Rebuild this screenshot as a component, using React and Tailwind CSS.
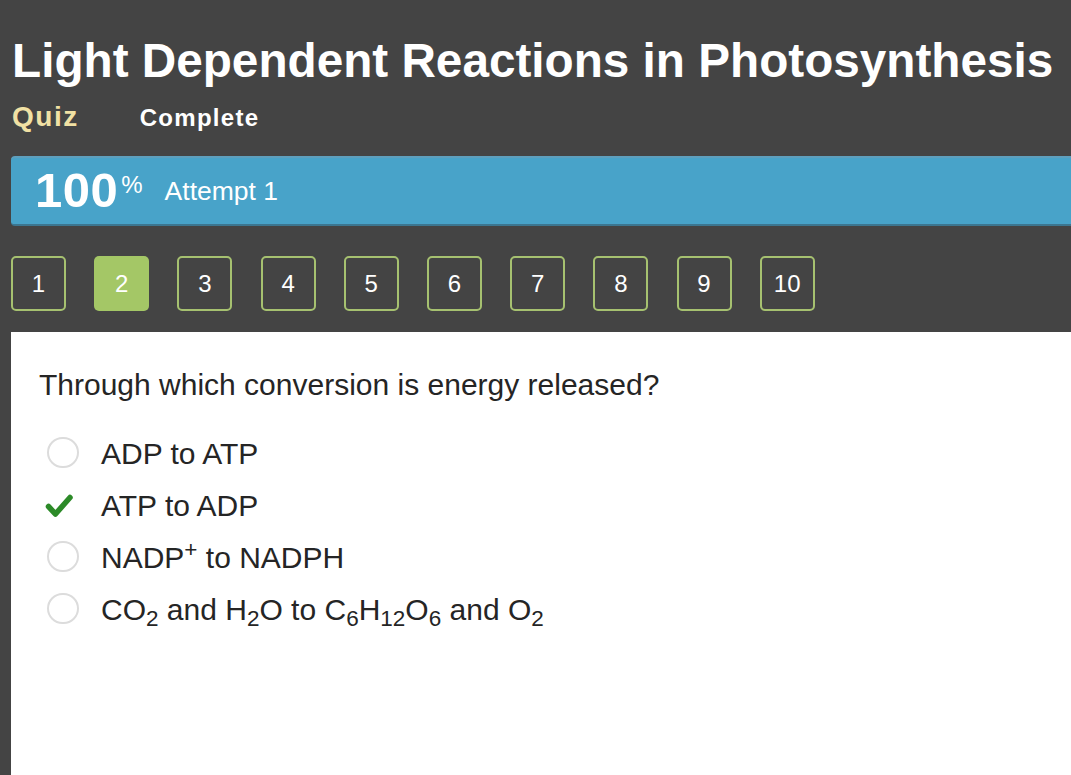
import React from 'react';

const questions = [1, 2, 3, 4, 5, 6, 7, 8, 9, 10];

const Radio = () => (
  <span className="block w-[32px] h-[31px] rounded-full border-2 border-[#dcdcdc] bg-white" />
);

const Check = () => (
  <svg width="32" height="32" viewBox="0 0 32 32" className="overflow-visible">
    <path
      d="M1.5 17.5 L8.5 25 L23 8.5"
      fill="none"
      stroke="#2c8a28"
      strokeWidth="5.5"
      strokeLinecap="round"
      strokeLinejoin="round"
    />
  </svg>
);

const App = () => {
  const options = [
    { id: 'a', checked: false, label: <>ADP to ATP</> },
    { id: 'b', checked: true, label: <>ATP to ADP</> },
    { id: 'c', checked: false, label: <>NADP<sup>+</sup> to NADPH</> },
    {
      id: 'd',
      checked: false,
      label: (
        <>
          CO<sub>2</sub> and H<sub>2</sub>O to C<sub>6</sub>H<sub>12</sub>O<sub>6</sub> and O<sub>2</sub>
        </>
      ),
    },
  ];

  return (
    <div
      className="min-h-screen flex flex-col bg-[#444444] text-white overflow-hidden"
      style={{ fontFamily: '"Liberation Sans", Arial, sans-serif' }}
    >
      {/* header */}
      <div className="pl-[12px] pt-[33px]">
        <h1 className="text-[47.7px] leading-[56px] font-bold whitespace-nowrap">
          Light Dependent Reactions in Photosynthesis
        </h1>
        <div className="mt-[11px] flex items-baseline leading-[34px]">
          <span className="text-[28px] font-bold text-[#f1e1a4] tracking-[1.5px]">Quiz</span>
          <span className="ml-[61px] text-[24px] font-bold tracking-[1.3px]">Complete</span>
        </div>
      </div>

      {/* score bar */}
      <div className="ml-[11px] mt-[21px] h-[70px] flex items-start bg-[#48a3c9] border-t-2 border-t-[#5e9fbd] border-b-2 border-b-[#3c7690] rounded-l-[4px] pl-[24px]">
        <span className="mt-[8px] text-[49px] leading-[49px] font-bold tracking-[0.5px]">100</span>
        <span className="mt-[15px] ml-[3px] text-[24px] leading-[24px]">%</span>
        <span className="mt-[20px] ml-[22px] text-[26.5px] leading-[26px]">Attempt 1</span>
      </div>

      {/* question nav */}
      <div className="ml-[11px] mt-[30px] flex gap-[28.2px]">
        {questions.map((n) => (
          <div
            key={n}
            className={
              n === 2
                ? 'w-[55px] h-[55px] flex items-center justify-center rounded-[5px] bg-[#a4c766] text-[24px]'
                : 'w-[55px] h-[55px] flex items-center justify-center rounded-[5px] border-2 border-[#a6c170] text-[24px]'
            }
          >
            {n}
          </div>
        ))}
      </div>

      {/* question panel */}
      <div className="ml-[11px] mt-[21px] flex-1 bg-white text-[#252525] pl-[28px] pt-[36px]">
        <p className="text-[30px] leading-[34px]">Through which conversion is energy released?</p>
        <div className="mt-[26px] pl-[8px]">
          {options.map((o) => (
            <div key={o.id} className="h-[52px] flex items-center">
              <span className="w-[32px] flex items-center justify-center -mt-[3px]">
                {o.checked ? <Check /> : <Radio />}
              </span>
              <span className="ml-[22px] text-[30px] leading-[52px] whitespace-nowrap">{o.label}</span>
            </div>
          ))}
        </div>
      </div>
    </div>
  );
};

export default App;
